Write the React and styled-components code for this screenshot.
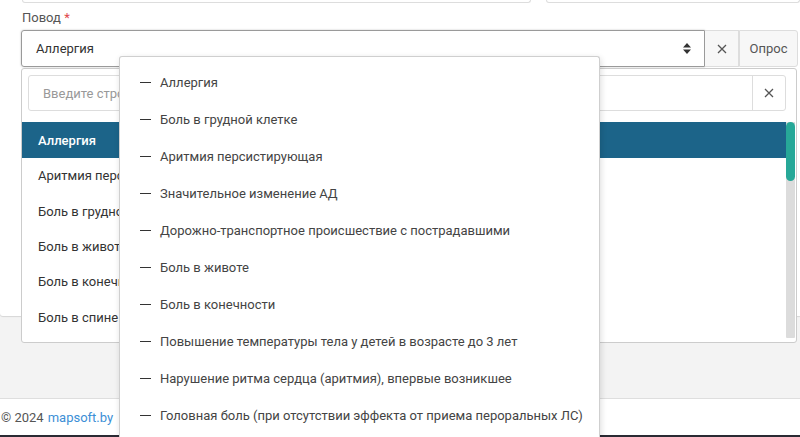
import React from "react";
import styled, { createGlobalStyle } from "styled-components";

const GlobalStyle = createGlobalStyle`
  html, body {
    margin: 0;
    padding: 0;
    height: 100%;
    overflow: hidden;
  }
  body {
    background: #f3f3f3;
    font-family: Roboto, "Liberation Sans", sans-serif;
    font-size: 13px;
    color: #333;
  }
`;

const reasons = [
  "Аллергия",
  "Аритмия персистирующая",
  "Боль в грудной клетке",
  "Боль в животе",
  "Боль в конечности",
  "Боль в спине",
];

const menuItems = [
  "Аллергия",
  "Боль в грудной клетке",
  "Аритмия персистирующая",
  "Значительное изменение АД",
  "Дорожно-транспортное происшествие с пострадавшими",
  "Боль в животе",
  "Боль в конечности",
  "Повышение температуры тела у детей в возрасте до 3 лет",
  "Нарушение ритма сердца (аритмия), впервые возникшее",
  "Головная боль (при отсутствии эффекта от приема пероральных ЛС)",
];

const Page = styled.div`
  position: relative;
  height: 437px;
  display: flex;
  flex-direction: column;
`;

const Card = styled.div`
  height: 316px;
  flex-shrink: 0;
  background: #fff;
  border-bottom-left-radius: 3px;
  box-shadow: 0 1px 1px rgba(0, 0, 0, 0.12);
  padding: 0 0 0 21px;
  display: flex;
  flex-direction: column;
`;

const StubRow = styled.div`
  display: flex;
  gap: 15px;
  height: 2px;
  margin-bottom: 9px;
`;

const Stub = styled.div`
  width: ${(p) => p.$w}px;
  height: 2px;
  border: 1px solid #ddd;
  border-top: none;
  border-radius: 0 0 3px 3px;
  margin-left: ${(p) => p.$ml || 0}px;
`;

const Label = styled.label`
  display: block;
  font-size: 13px;
  color: #555;
  line-height: 14px;
  margin-bottom: 5px;
  margin-left: 1px;

  span {
    color: #e0474c;
  }
`;

const InputGroup = styled.div`
  position: relative;
  display: flex;
  height: 37px;
`;

const SelectBox = styled.div`
  width: 684px;
  box-sizing: border-box;
  border: 1px solid #9a9a9a;
  border-radius: 3px 0 0 3px;
  box-shadow: 0 0 2px rgba(0, 0, 0, 0.25);
  display: flex;
  align-items: center;
  justify-content: space-between;
  padding: 0 13px 0 14px;
  color: #333;
`;

const Addon = styled.div`
  box-sizing: border-box;
  width: ${(p) => p.$w}px;
  background: #f7f7f7;
  border: 1px solid #ddd;
  border-left: ${(p) => (p.$first ? "none" : "1px solid #ddd")};
  border-radius: ${(p) => (p.$last ? "0 3px 3px 0" : "0")};
  display: flex;
  align-items: center;
  justify-content: center;
  color: #555;
  font-size: 13px;
`;

const Dropdown = styled.div`
  position: absolute;
  top: calc(100% + 1px);
  left: 0;
  width: 776px;
  height: 275px;
  box-sizing: border-box;
  background: #fff;
  border: 1px solid #ccc;
  border-radius: 3px;
  padding: 6px 0 0 0;
  display: flex;
  flex-direction: column;
`;

const SearchRow = styled.div`
  display: flex;
  height: 36px;
  flex-shrink: 0;
  margin: 0 10px 0 6px;
  box-sizing: border-box;
  border: 1px solid #ddd;
  border-radius: 3px;
`;

const SearchInput = styled.div`
  flex: 1;
  display: flex;
  align-items: center;
  padding-left: 14px;
  color: #999;
`;

const SearchClear = styled.div`
  width: 32px;
  border-left: 1px solid #ddd;
  display: flex;
  align-items: center;
  justify-content: center;
`;

const ListWrap = styled.div`
  margin-top: 11px;
  display: flex;
  flex: 1;
  min-height: 0;
`;

const Options = styled.ul`
  flex: 1;
  list-style: none;
  margin: 0;
  padding: 0;
  overflow: hidden;
`;

const Option = styled.li`
  height: ${(p) => (p.$active ? 36 : 35.4)}px;
  display: flex;
  align-items: center;
  padding-left: 16px;
  background: ${(p) => (p.$active ? "#1c6489" : "transparent")};
  color: ${(p) => (p.$active ? "#fff" : "#333")};
  font-weight: ${(p) => (p.$active ? 500 : 400)};
`;

const Track = styled.div`
  width: 9px;
  margin-right: 1px;
  margin-bottom: 4px;
  background: #dcdcdc;
  border-radius: 0 0 1px 1px;
`;

const Thumb = styled.div`
  height: 59px;
  background: #27a898;
  border-radius: 5px;
`;

const Gap = styled.div`
  height: 82px;
  flex-shrink: 0;
`;

const Footer = styled.footer`
  flex: 1;
  background: #fff;
  border-top: 1px solid #dedede;
  border-bottom: 2px solid #2a2a33;
  display: flex;
  align-items: center;
  padding-left: 1px;
  font-size: 13px;
  color: #555;

  a {
    color: #3c8fd6;
    text-decoration: none;
    margin-left: 4px;
  }
`;

const Menu = styled.ul`
  position: absolute;
  top: 56px;
  left: 119px;
  width: 481px;
  height: 400px;
  box-sizing: border-box;
  margin: 0;
  padding: 7px 0 0 0;
  list-style: none;
  background: #fff;
  border: 1px solid #cfcfcf;
  border-bottom: none;
  border-radius: 3px 3px 0 0;
  box-shadow: 1px 2px 6px rgba(0, 0, 0, 0.14);
`;

const MenuItem = styled.li`
  height: 37px;
  display: flex;
  align-items: center;
  padding-left: 20px;
  color: #444;
  white-space: nowrap;

  &::before {
    content: "";
    width: 11px;
    height: 1.5px;
    background: #333;
    margin-right: 9px;
  }
`;

const Cross = ({ size = 10, color = "#555" }) => (
  <svg width={size} height={size} viewBox="0 0 10 10">
    <path d="M1 1 L9 9 M9 1 L1 9" stroke={color} strokeWidth="1.3" />
  </svg>
);

const UpDown = () => (
  <svg width="8" height="11" viewBox="0 0 8 11">
    <path d="M4 0 L8 4.5 H0 Z M4 11 L8 6.5 H0 Z" fill="#333" />
  </svg>
);

export default function App() {
  return (
    <>
      <GlobalStyle />
      <Page>
        <Card>
          <StubRow>
            <Stub $w={508} $ml={1} />
            <Stub $w={252} />
          </StubRow>
          <Label>
            Повод <span>*</span>
          </Label>
          <InputGroup>
            <SelectBox>
              Аллергия
              <UpDown />
            </SelectBox>
            <Addon $w={34} $first>
              <Cross />
            </Addon>
            <Addon $w={59} $last>
              Опрос
            </Addon>
            <Dropdown>
              <SearchRow>
                <SearchInput>Введите строку для поиска</SearchInput>
                <SearchClear>
                  <Cross />
                </SearchClear>
              </SearchRow>
              <ListWrap>
                <Options>
                  {reasons.map((r, i) => (
                    <Option key={r} $active={i === 0}>
                      {r}
                    </Option>
                  ))}
                </Options>
                <Track>
                  <Thumb />
                </Track>
              </ListWrap>
            </Dropdown>
          </InputGroup>
        </Card>
        <Gap />
        <Footer>
          © 2024<a href="#">mapsoft.by</a>
        </Footer>
        <Menu>
          {menuItems.map((m) => (
            <MenuItem key={m}>{m}</MenuItem>
          ))}
        </Menu>
      </Page>
    </>
  );
}
